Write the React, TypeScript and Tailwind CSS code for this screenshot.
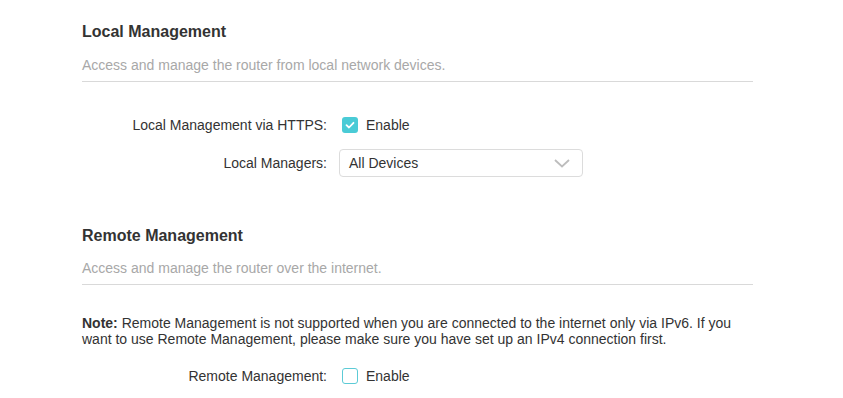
import React from "react";

const font = { fontFamily: '"Liberation Sans", Arial, sans-serif' };

function Checked() {
  return (
    <span className="ml-[3px] flex h-[16px] w-[16px] items-center justify-center rounded-[3px] bg-[#4acbd6]">
      <svg width="10" height="8" viewBox="0 0 10 8" fill="none">
        <path d="M1.5 4.2 L4 6.5 L8.5 1.8" stroke="#ffffff" strokeWidth="1.8" strokeLinecap="round" strokeLinejoin="round" />
      </svg>
    </span>
  );
}

function Unchecked() {
  return <span className="ml-[3px] block h-[16px] w-[16px] rounded-[3px] border border-[#5ccbd6] bg-white" />;
}

function Row({ label, children, className = "" }: { label: string; children: React.ReactNode; className?: string }) {
  return (
    <div className={"flex h-[28px] items-center " + className}>
      <div className="w-[245px] text-right text-[14px] text-[#333333]">{label}</div>
      <div className="ml-[12px] flex items-center">{children}</div>
    </div>
  );
}

export default function App() {
  return (
    <div className="min-h-[398px] w-[843px] bg-white" style={font}>
      <div className="w-[671px] pl-[82px] box-content">
        <div className="pt-[22px] text-[16px] font-bold leading-[20px] text-[#333333]">Local Management</div>
        <div className="mt-[13px] border-b border-[#d9d9d9] pb-[6px] text-[14px] leading-[20px] text-[#a8a8a8]">
          Access and manage the router from local network devices.
        </div>

        <Row label="Local Management via HTTPS:" className="mt-[29px]">
          <Checked />
          <span className="ml-[8px] text-[14px] text-[#333333]">Enable</span>
        </Row>
        <Row label="Local Managers:" className="mt-[10px]">
          <div className="flex h-[28px] w-[244px] items-center justify-between rounded-[4px] border border-[#dcdcdc] bg-white pl-[9px] pr-[12px]">
            <span className="pt-[1px] text-[14px] text-[#333333]">All Devices</span>
            <svg width="16" height="9" viewBox="0 0 16 9" fill="none">
              <path d="M1 1 L8 7.5 L15 1" stroke="#bdbdbd" strokeWidth="1.8" />
            </svg>
          </div>
        </Row>

        <div className="mt-[49px] text-[16px] font-bold leading-[20px] text-[#333333]">Remote Management</div>
        <div className="mt-[12px] border-b border-[#d9d9d9] pb-[6px] text-[14px] leading-[20px] text-[#a8a8a8]">
          Access and manage the router over the internet.
        </div>

        <div className="mt-[30px] text-[14px] leading-[16px] text-[#333333]">
          <span className="font-bold">Note:</span> Remote Management is not supported when you are connected to the internet only via IPv6. If you want to use Remote Management, please make sure you have set up an IPv4 connection first.
        </div>

        <Row label="Remote Management:" className="mt-[15px]">
          <Unchecked />
          <span className="ml-[8px] text-[14px] text-[#333333]">Enable</span>
        </Row>
      </div>
    </div>
  );
}
